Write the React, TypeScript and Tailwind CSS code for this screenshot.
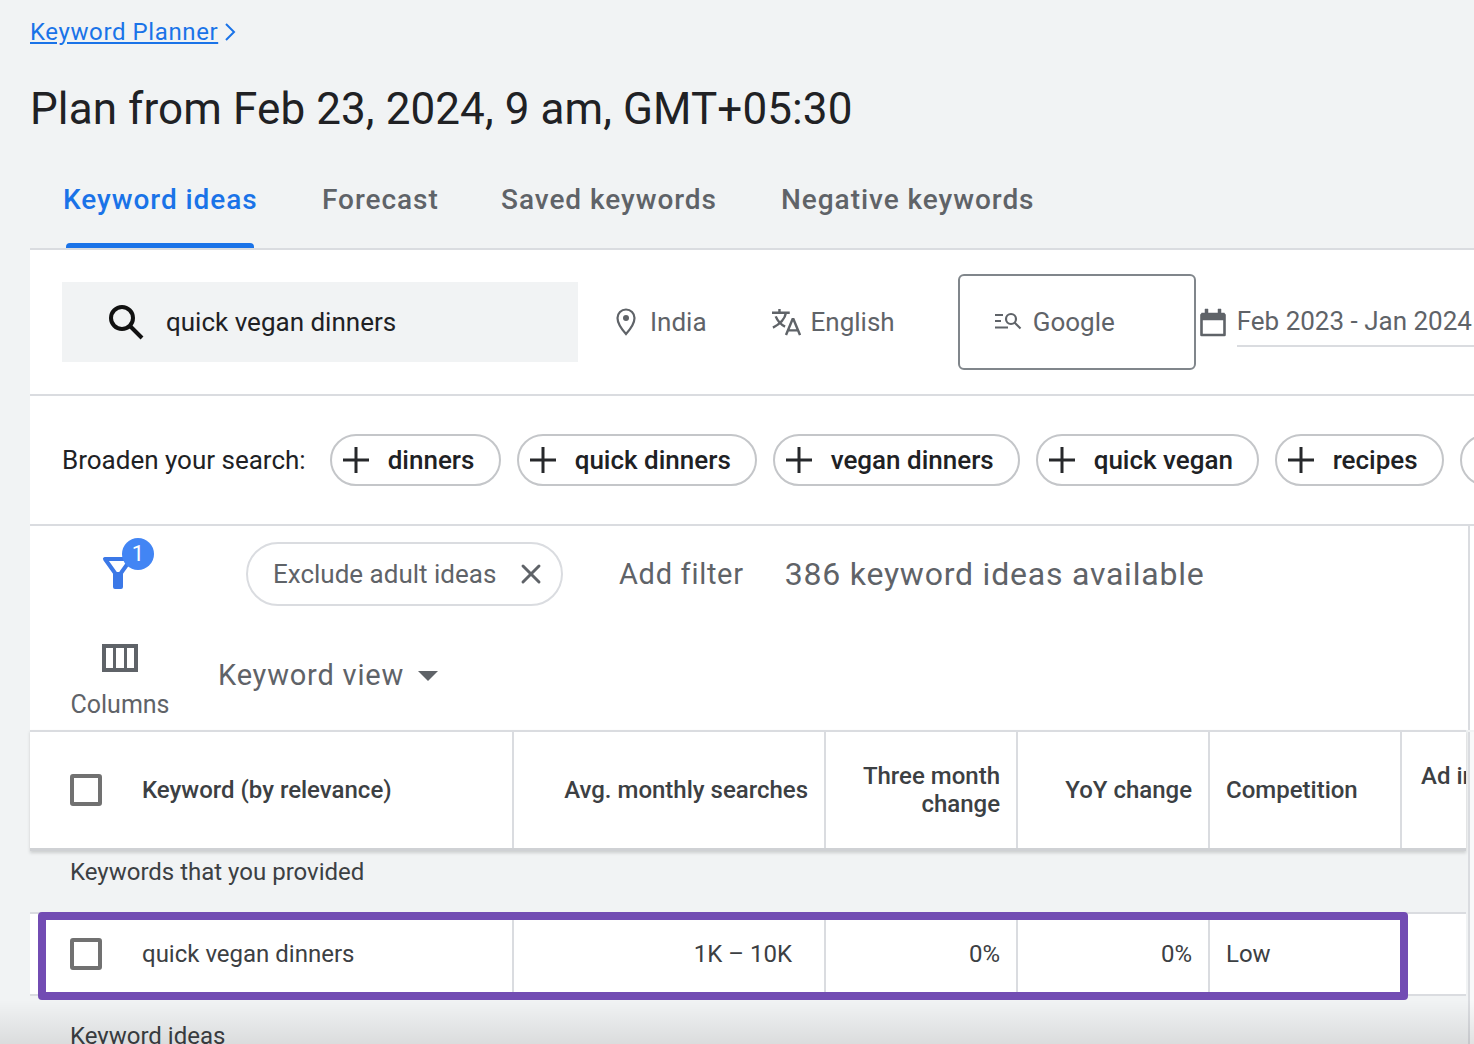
import { X } from "lucide-react";

const roboto = "font-['Roboto',sans-serif]";

const chips = [
  { label: "dinners", width: "w-[171px]" },
  { label: "quick dinners", width: "w-[240px]" },
  { label: "vegan dinners", width: "w-[247px]" },
  { label: "quick vegan", width: "w-[223px]" },
  { label: "recipes", width: "w-[169px]" },
];

const Chip = ({ label, width }: { label: string; width: string }) => {
  return (
    <div className={`flex h-[52px] shrink-0 items-center rounded-[26px] border-2 border-[#c4c6c9] pl-[11px] ${width}`}>
      <svg width="26" height="26" viewBox="0 0 26 26" stroke="#26282b" strokeWidth="3" className="shrink-0">
        <path d="M0 13h26M13 0v26" />
      </svg>
      <span className="ml-[19px] whitespace-nowrap text-[26px] font-medium text-[#202124]">{label}</span>
    </div>
  );
};

const Checkbox = () => {
  return <div className="h-[32px] w-[32px] shrink-0 rounded-[3px] border-[4px] border-[#717171] bg-white" />;
};

export default function App() {
  return (
    <div className={`relative h-[1044px] w-[1474px] overflow-hidden bg-[#f1f3f4] ${roboto}`}>
      <div className="pl-[30px]">
        <div className="flex h-[64px] items-center pb-[1px] text-[24px] tracking-[0.6px] text-[#1a73e8]">
          <span className="underline underline-offset-2">Keyword Planner</span>
          <svg width="14" height="20" viewBox="0 0 14 20" className="ml-[5px]" fill="none" stroke="#1a73e8" strokeWidth="2">
            <path d="M3 2l8 8-8 8" />
          </svg>
        </div>
        <h1 className="flex h-[88px] items-center pt-[2px] text-[44px] font-normal tracking-[0.1px] whitespace-nowrap text-[#202124]">
          Plan from Feb 23, 2024, 9 am, GMT+05:30
        </h1>

        {/* tabs */}
        <div className="flex h-[98px] items-start border-b-2 border-[#dadce0] pl-[33px] pt-[27px] text-[28px] font-medium tracking-[0.95px] whitespace-nowrap text-[#5f6368]">
          <div className="relative w-[259px] text-[#1a73e8]">
            Keyword ideas
            <div className="absolute left-[3px] top-[64px] h-[5px] w-[188px] rounded-t-[4px] bg-[#1a73e8]" />
          </div>
          <div className="w-[179px]">Forecast</div>
          <div className="w-[280px]">Saved keywords</div>
          <div>Negative keywords</div>
        </div>

        <div className="bg-white">
          {/* search settings */}
          <div className="flex h-[146px] items-center border-b-2 border-[#dadce0] pl-[32px] text-[26px] whitespace-nowrap text-[#5f6368]">
            <div className="flex h-[80px] w-[516px] shrink-0 items-center bg-[#f1f3f4] pl-[45px] text-[#202124]">
              <svg width="38" height="38" viewBox="0 0 38 38" fill="none" stroke="#111" className="shrink-0">
                <circle cx="15" cy="15" r="11" strokeWidth="4" />
                <path d="M23 23l12 12" strokeWidth="4" />
              </svg>
              <span className="ml-[21px]">quick vegan dinners</span>
            </div>
            <svg width="20" height="28" viewBox="0 0 20 28" fill="none" stroke="#5f6368" strokeWidth="2.2" className="ml-[38px] shrink-0">
              <path d="M10 1.5C5.2 1.5 1.5 5.3 1.5 10c0 6.6 8.5 16 8.5 16s8.5-9.4 8.5-16c0-4.7-3.7-8.5-8.5-8.5z" />
              <circle cx="10" cy="10" r="3" fill="#5f6368" stroke="none" />
            </svg>
            <span className="ml-[14px]">India</span>
            <svg width="30" height="28" viewBox="0 0 32 30" fill="none" stroke="#5f6368" strokeWidth="2.6" className="ml-[64px] shrink-0">
              <path d="M1 5h19M9 1v4M16 5c-1 6-6 12-14 16M5 9c2 5 6 9 10 11M16 29l7-17h1l7 17M19 24h10" />
            </svg>
            <span className="ml-[10px]">English</span>
            <div className="ml-[63px] flex h-[96px] w-[238px] shrink-0 items-center rounded-[6px] border-2 border-[#80868b] pl-[34px]">
              <svg width="28" height="20" viewBox="0 0 28 20" fill="none" stroke="#5f6368" strokeWidth="2.2">
                <path d="M1 3h8M1 9h6M1 15.5h13" />
                <circle cx="17" cy="7" r="5" />
                <path d="M20.5 10.5l6 6" />
              </svg>
              <span className="ml-[11px]">Google</span>
            </div>
            <svg width="26" height="30" viewBox="0 0 26 30" className="ml-[4px] shrink-0" fill="none" stroke="#5f6368">
              <path d="M1.5 8h23v20h-23z" strokeWidth="2.6" strokeLinejoin="round" />
              <path d="M1.5 6h23v7h-23zM5 2h3v4H5zM18 2h3v4h-3z" fill="#5f6368" strokeWidth="0.5" />
            </svg>
            <div className="ml-[11px] mt-[4px] w-[260px] shrink-0 border-b-2 border-[#dadce0] pb-[4px]">Feb 2023 - Jan 2024</div>
          </div>

          {/* broaden your search */}
          <div className="flex h-[130px] items-center gap-[16px] border-b-2 border-[#dadce0] pl-[32px] text-[26px] whitespace-nowrap text-[#202124]">
            <span className="mr-[8px]">Broaden your search:</span>
            {chips.map((chip) => (
              <Chip key={chip.label} label={chip.label} width={chip.width} />
            ))}
            <div className="h-[52px] w-[60px] shrink-0 rounded-[26px] border-2 border-[#c4c6c9]" />
          </div>

          {/* filters */}
          <div className="mr-[4px] h-[204px] border-r-2 border-[#dadce0] text-[#5f6368]">
            <div className="flex h-[96px] items-center whitespace-nowrap">
              <div className="relative ml-[72px] h-[60px] w-[54px] shrink-0">
                <svg width="32" height="36" viewBox="0 0 32 36" fill="none" className="absolute left-0 top-[10px]">
                  <path d="M3 5h26L19 19v14h-6V19z" stroke="#3b78e7" strokeWidth="4" strokeLinejoin="round" />
                  <path d="M14 18h4v15h-4z" fill="#3b78e7" />
                </svg>
                <div className="absolute left-[20px] top-[-6px] flex h-[32px] w-[32px] items-center justify-center rounded-full bg-[#4285f4] text-[22px] leading-none text-white">
                  1
                </div>
              </div>
              <div className="ml-[90px] flex h-[64px] w-[317px] shrink-0 items-center rounded-[32px] border-2 border-[#dadce0] pl-[25px] text-[26px]">
                Exclude adult ideas
                <X size={32} strokeWidth={2.2} className="ml-[19px] shrink-0" />
              </div>
              <span className="ml-[56px] pt-[2px] text-[29px] tracking-[0.7px]">Add filter</span>
              <span className="ml-[41px] text-[32px] tracking-[0.78px]">386 keyword ideas available</span>
            </div>
            <div className="flex">
              <div className="ml-[40px] flex w-[100px] shrink-0 flex-col items-center">
                <div className="mt-[22px] flex h-[28px] w-[36px] divide-x-[3px] divide-[#5f6368] border-[4px] border-[#5f6368]">
                  <div className="flex-1" />
                  <div className="flex-1" />
                  <div className="flex-1" />
                </div>
                <span className="mt-[14px] text-[25px] font-normal">Columns</span>
              </div>
              <div className="ml-[48px] mt-[37px] flex h-[34px] items-center text-[29px] tracking-[0.8px]">
                Keyword view
                <div className="ml-[14px] h-0 w-0 border-x-[10px] border-t-[10px] border-x-transparent border-t-[#5f6368]" />
              </div>
            </div>
          </div>
        </div>

        {/* keyword table */}
        <div className="relative mr-[8px]">
          <div className="grid h-[121px] grid-cols-[484px_312px_192px_192px_192px_1fr] border-y-2 border-b-[3px] border-[#dadce0] border-b-[#cfd1d4] bg-white text-[24px] font-medium text-[#3c4043] shadow-[0_2px_3px_rgba(60,64,67,0.2)]">
            <div className="flex items-center border-r-2 border-[#dadce0] pl-[40px]">
              <Checkbox />
              <span className="ml-[40px] whitespace-nowrap">Keyword (by relevance)</span>
            </div>
            <div className="flex items-center justify-end border-r-2 border-[#dadce0] pr-[16px] whitespace-nowrap">Avg. monthly searches</div>
            <div className="flex items-center justify-end border-r-2 border-[#dadce0] pr-[16px] text-right leading-[28px]">
              Three month
              <br />
              change
            </div>
            <div className="flex items-center justify-end border-r-2 border-[#dadce0] pr-[16px] whitespace-nowrap">YoY change</div>
            <div className="flex items-center border-r-2 border-[#dadce0] pl-[16px]">Competition</div>
            <div className="overflow-hidden pl-[19px] pt-[26px] whitespace-nowrap">Ad impression</div>
          </div>
          <div className="flex h-[61px] items-start pl-[40px] pt-[3px] text-[24px] text-[#3c4043]">Keywords that you provided</div>
          <div className="grid h-[84px] grid-cols-[484px_312px_192px_192px_192px_1fr] border-y-2 border-[#dadce0] bg-white text-[24px] text-[#3c4043]">
            <div className="flex items-center border-r-2 border-[#dadce0] pl-[40px]">
              <Checkbox />
              <span className="ml-[40px] whitespace-nowrap">quick vegan dinners</span>
            </div>
            <div className="flex items-center justify-end border-r-2 border-[#dadce0] pr-[32px]">1K – 10K</div>
            <div className="flex items-center justify-end border-r-2 border-[#dadce0] pr-[16px]">0%</div>
            <div className="flex items-center justify-end border-r-2 border-[#dadce0] pr-[16px]">0%</div>
            <div className="flex items-center pl-[16px]">Low</div>
            <div />
          </div>
          <div className="pl-[40px] pt-[26px] text-[24px] leading-[28px] text-[#3c4043]">Keyword ideas</div>
          {/* purple annotation around the row */}
          <div className="absolute left-[8px] top-[182px] h-[88px] w-[1370px] rounded-[4px] border-[8px] border-[#724cb3]" />
        </div>
      </div>

      {/* right edge of the scroll area and fade at the bottom */}
      <div className="absolute bottom-0 right-0 top-[732px] w-[6px] border-l-2 border-[#dadce0] bg-[#f8f9f9]" />
      <div className="absolute inset-x-0 bottom-0 h-[44px] bg-gradient-to-b from-transparent to-[#00000018]" />
    </div>
  );
}
